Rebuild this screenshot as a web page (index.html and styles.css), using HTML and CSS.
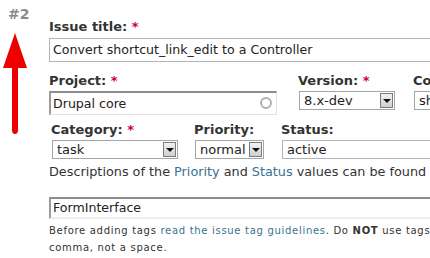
FILE: index.html
```html
<!DOCTYPE html>
<html lang="en">
<head>
  <meta charset="UTF-8" />
  <title>Issue edit</title>
  <link rel="stylesheet" href="styles.css">
</head>
<body>
  <div class="page">
    <!-- Left marker -->
    <div class="marker">
      <div class="step">#2</div>
      <svg class="arrow" width="30" height="102" viewBox="0 0 30 102">
        <path d="M15 0 L27 35 L18 35 L18 97 Q18 101 15 101 Q12 101 12 97 L12 35 L3 35 Z" fill="#ee0000" />
      </svg>
    </div>

    <!-- Issue form -->
    <div class="form">
      <div class="field title-field">
        <label>Issue title: <span class="req">*</span></label>
        <div class="text-input wide">Convert shortcut_link_edit to a Controller</div>
      </div>

      <div class="row">
        <div class="field project">
          <label>Project: <span class="req">*</span></label>
          <div class="text-input auto">Drupal core<span class="throbber"></span></div>
        </div>
        <div class="field version">
          <label>Version: <span class="req">*</span></label>
          <div class="select" style="width: 96px">8.x-dev<span class="drop"></span></div>
        </div>
        <div class="field component">
          <label>Component: <span class="req">*</span></label>
          <div class="select" style="width: 120px">shortcut.module<span class="drop"></span></div>
        </div>
      </div>

      <div class="row second">
        <div class="field">
          <label>Category: <span class="req">*</span></label>
          <div class="select" style="width: 126px">task<span class="drop"></span></div>
        </div>
        <div class="field">
          <label>Priority:</label>
          <div class="select" style="width: 69px">normal<span class="drop"></span></div>
        </div>
        <div class="field">
          <label>Status:</label>
          <div class="select status" style="width: 200px">active</div>
        </div>
      </div>

      <p class="description">Descriptions of the <a href="#">Priority</a> and <a href="#">Status</a> values can be found in the Issue queue handbook.</p>

      <div class="text-input tags">FormInterface</div>
      <p class="help">Before adding tags <a href="#">read the issue tag guidelines</a>. Do <strong>NOT</strong> use tags to track module names; separate each tag with a comma, not a space.</p>
    </div>
  </div>
</body>
</html>
```

FILE: styles.css
```css
body {
  margin: 0;
  padding: 0;
  background: #ffffff;
  font-family: 'DejaVu Sans', Verdana, sans-serif;
  color: #222;
  overflow: hidden;
}

.page {
  display: flex;
  width: 430px;
  height: 258px;
  overflow: hidden;
}

.marker {
  width: 49px;
  flex-shrink: 0;
  display: flex;
  flex-direction: column;
}

.step {
  margin: 6px 0 0 8px;
  font-size: 14px;
  font-weight: bold;
  color: #8a8a8a;
  line-height: 16px;
}

.arrow {
  margin: 11px 0 0 0;
}

.form {
  flex: 1;
  min-width: 0;
  padding-top: 19px;
}

label {
  display: block;
  font-size: 13px;
  font-weight: bold;
  line-height: 16px;
  color: #333;
  white-space: nowrap;
}

.req {
  color: #cc0033;
}

.field {
  display: flex;
  flex-direction: column;
  gap: 2px;
  flex-shrink: 0;
}

.title-field {
  gap: 3px;
}

.text-input {
  box-sizing: border-box;
  height: 24px;
  border: 1px solid #b4b4b4;
  padding: 0 3px;
  font-size: 12.6px;
  line-height: 22px;
  white-space: nowrap;
  position: relative;
}

.wide {
  width: 420px;
}

.auto {
  width: 228px;
  border-top: 2px solid #8c8c8c;
  border-left: 2px solid #9c9c9c;
  border-right-color: #e2e2e2;
  border-bottom-color: #e2e2e2;
  line-height: 21px;
  padding-left: 2px;
}

.throbber {
  position: absolute;
  right: 4px;
  top: 4px;
  width: 8px;
  height: 8px;
  border: 2px solid #b0b0b0;
  border-radius: 50%;
}

.row {
  display: flex;
  margin-top: 11px;
}

.project {
  width: 249px;
}

.version {
  width: 115px;
}

.second {
  margin-top: 7px;
  padding-left: 2px;
}

.second .field:nth-child(1) {
  width: 143px;
}

.second .field:nth-child(2) {
  width: 87px;
}

.select {
  box-sizing: border-box;
  height: 19px;
  border: 1px solid #a5a5a5;
  padding: 0 0 0 4px;
  font-size: 13px;
  line-height: 17px;
  white-space: nowrap;
  position: relative;
  margin-left: 1px;
  overflow: hidden;
}

.drop {
  position: absolute;
  right: 1px;
  top: 1px;
  width: 13px;
  height: 15px;
  box-sizing: border-box;
  border: 1px solid #7a7a7a;
  background: linear-gradient(#f2f2f2, #cfcfcf);
}

.drop::after {
  content: "";
  position: absolute;
  left: 2px;
  top: 5px;
  border-left: 4px solid transparent;
  border-right: 4px solid transparent;
  border-top: 4px solid #111;
}

.status {
  border-color: #b4b4b4;
}

.description {
  margin: 5px 0 0 0;
  font-size: 12.8px;
  line-height: 16px;
  color: #333;
  white-space: nowrap;
}

.description a {
  color: #3a7190;
  text-decoration: none;
}

.tags {
  margin-top: 17px;
  width: 420px;
  height: 22px;
  border-top: 2px solid #8c8c8c;
  border-left: 2px solid #9c9c9c;
  border-right: 1px solid #e8e8e8;
  border-bottom: 2px solid #eeeeee;
  line-height: 18px;
  padding-left: 2px;
}

.help {
  margin: 3px 0 0 0;
  font-size: 10px;
  letter-spacing: 0.7px;
  line-height: 17px;
  color: #333;
  width: 700px;
}

.help a {
  color: #3a7190;
  text-decoration: none;
}
```
